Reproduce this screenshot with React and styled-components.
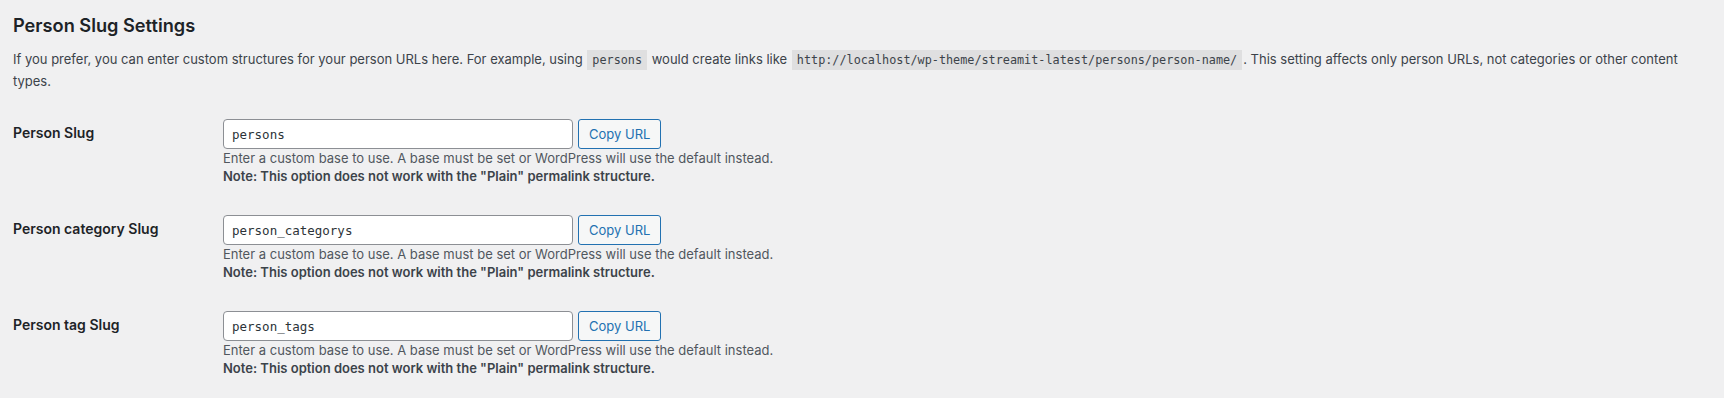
import React from "react";
import styled, { createGlobalStyle } from "styled-components";

const GlobalStyle = createGlobalStyle`
  html, body {
    margin: 0;
    background: #f0f0f1;
  }
  body {
    font-family: Inter, "Noto Sans", sans-serif;
    font-size: 13px;
    color: #3c434a;
  }
`;

const Wrap = styled.div`
  padding: 13px 20px 0 13px;
`;

const Heading = styled.h2`
  margin: 0;
  font-size: 18.2px;
  line-height: 24px;
  font-weight: 600;
  color: #1d2327;
`;

const Intro = styled.p`
  margin: 12px 0 0;
  font-size: 13px;
  line-height: 21px;
`;

const Code = styled.code`
  font-family: "DejaVu Sans Mono", monospace;
  font-size: 11.8px;
  padding: 3px 5px 3px;
  margin: 0 1px;
  background: rgba(0, 0, 0, 0.07);
`;

const Table = styled.div`
  margin-top: 12px;
  display: flex;
  flex-direction: column;
`;

const Row = styled.div`
  display: grid;
  grid-template-columns: 210px 1fr;
  padding: 15px 0 14px;
`;

const Label = styled.div`
  padding-top: 5px;
  font-size: 14px;
  line-height: 18px;
  font-weight: 600;
  color: #1d2327;
`;

const Field = styled.div`
  display: flex;
  flex-direction: column;
`;

const Controls = styled.div`
  display: flex;
  gap: 5px;
  height: 30px;
`;

const Input = styled.input`
  box-sizing: border-box;
  width: 350px;
  height: 30px;
  padding: 0 8px;
  border: 1px solid #8c8f94;
  border-radius: 4px;
  background: #fff;
  color: #2c3338;
  font-family: "DejaVu Sans Mono", monospace;
  font-size: 12.5px;
  outline: none;
`;

const Button = styled.button`
  box-sizing: border-box;
  height: 30px;
  padding: 0 10px;
  border: 1px solid #2271b1;
  border-radius: 3px;
  background: #f6f7f7;
  color: #2271b1;
  font-family: Inter, "Noto Sans", sans-serif;
  font-size: 13px;
  cursor: pointer;
`;

const Help = styled.p`
  margin: 0;
  font-size: 13px;
  line-height: ${(p) => (p.$note ? "19px" : "18px")};
  color: ${(p) => (p.$note ? "#3c434a" : "#50575e")};
  font-weight: ${(p) => (p.$note ? 600 : 400)};
`;

const fields = [
  { label: "Person Slug", value: "persons" },
  { label: "Person category Slug", value: "person_categorys" },
  { label: "Person tag Slug", value: "person_tags" },
];

export default function App() {
  return (
    <Wrap>
      <GlobalStyle />
      <Heading>Person Slug Settings</Heading>
      <Intro>
        If you prefer, you can enter custom structures for your person URLs here. For example, using{" "}
        <Code>persons</Code> would create links like{" "}
        <Code>http://localhost/wp-theme/streamit-latest/persons/person-name/</Code>. This setting affects
        only person URLs, not categories or other content types.
      </Intro>
      <Table>
        {fields.map((f) => (
          <Row key={f.label}>
            <Label>{f.label}</Label>
            <Field>
              <Controls>
                <Input defaultValue={f.value} />
                <Button type="button">Copy URL</Button>
              </Controls>
              <Help>
                Enter a custom base to use. A base must be set or WordPress will use the default instead.
              </Help>
              <Help $note>Note: This option does not work with the "Plain" permalink structure.</Help>
            </Field>
          </Row>
        ))}
      </Table>
    </Wrap>
  );
}
